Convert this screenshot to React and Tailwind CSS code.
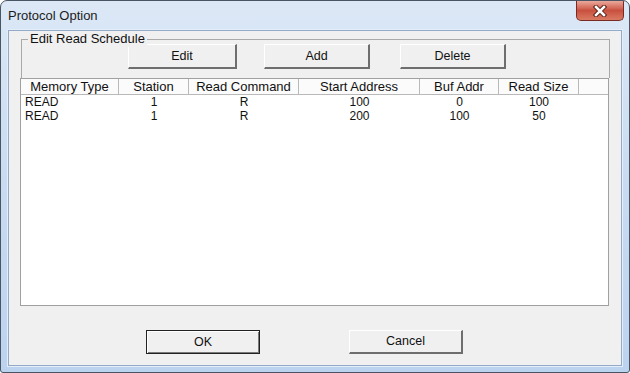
import React from "react";

const columns = [
  { title: "Memory Type", w: "w-[98px]", align: "text-left pl-[4px]" },
  { title: "Station", w: "w-[70px]", align: "text-center" },
  { title: "Read Command", w: "w-[110px]", align: "text-center" },
  { title: "Start Address", w: "w-[121px]", align: "text-center" },
  { title: "Buf Addr", w: "w-[79px]", align: "text-center" },
  { title: "Read Size", w: "w-[80px]", align: "text-center" },
];

const rows = [
  ["READ", "1", "R", "100", "0", "100"],
  ["READ", "1", "R", "200", "100", "50"],
];

// classic raised win32 push button
const Button = ({ label, className }) => (
  <button
    className={`h-[25px] bg-[#f0f0f0] border-t border-l border-t-white border-l-white border-r-2 border-b-2 border-r-[#6e6e6e] border-b-[#6e6e6e] text-[12.5px] text-[#111] ${className}`}
  >
    {label}
  </button>
);

const CloseButton = () => (
  <div className="w-[48px] h-[20px] rounded-b-[5px] border border-t-0 border-[#7a2a22] bg-gradient-to-b from-[#e9a99c] via-[#c9503f] to-[#d97a63] flex items-center justify-center">
    <svg width="16" height="12" viewBox="0 0 16 12">
      <path d="M4 2 L12 10 M12 2 L4 10" stroke="#5a2018" strokeWidth="4.5" strokeLinecap="square" />
      <path d="M4 2 L12 10 M12 2 L4 10" stroke="#ffffff" strokeWidth="2.5" strokeLinecap="square" />
    </svg>
  </div>
);

const App = () => {
  return (
    <div
      className="w-[630px] h-[373px] flex flex-col border border-[#4a5563] rounded-t-[7px] rounded-b-[3px] bg-gradient-to-b from-[#dce8f6] via-[#c8dbf1] to-[#bcd3ef] overflow-hidden"
      style={{ fontFamily: '"Liberation Sans", Arial, sans-serif' }}
    >
      {/* title bar */}
      <div className="h-[29px] flex justify-between pl-[7px] pr-[5px] shrink-0">
        <div className="self-center text-[13px] text-[#1c1c1c] pt-[1px]">Protocol Option</div>
        <CloseButton />
      </div>

      {/* client area */}
      <div className="flex-1 px-[7px] pb-[6px] flex">
        <div className="flex-1 bg-[#f0f0f0] border border-[#93abc9] shadow-[0_0_0_1px_#e4eefa] flex flex-col pt-[8px]">
          {/* group box */}
          <div className="relative ml-[12px] mr-[11px] h-[39px] border-t border-l border-r border-[#a9a9a9] shrink-0">
            <span className="absolute left-[6px] top-[-9px] px-[2px] bg-[#f0f0f0] text-[13px] leading-[16px] text-[#111]">
              Edit Read Schedule
            </span>
            <div className="flex pt-[4px]">
              <Button label="Edit" className="ml-[106px] w-[109px]" />
              <Button label="Add" className="ml-[27px] w-[106px]" />
              <Button label="Delete" className="ml-[30px] w-[106px]" />
            </div>
          </div>

          {/* list view */}
          <div className="ml-[11px] mr-[12px] h-[228px] border border-[#a0a0a0] bg-white shrink-0 text-[#111]">
            <div className="flex h-[16px] border-b border-[#b9b9b9] bg-[#fbfbfb] text-[13px]">
              {columns.map((c) => (
                <div
                  key={c.title}
                  className={`${c.w} shrink-0 border-r border-[#b9b9b9] text-center leading-[15px]`}
                >
                  {c.title}
                </div>
              ))}
              <div className="flex-1" />
            </div>
            <div className="text-[12px]">
              {rows.map((r, i) => (
                <div key={i} className="flex h-[14px] leading-[14px]">
                  {r.map((cell, j) => (
                    <div key={j} className={`${columns[j].w} shrink-0 ${columns[j].align}`}>
                      {cell}
                    </div>
                  ))}
                </div>
              ))}
            </div>
          </div>

          {/* dialog buttons */}
          <div className="flex mt-[24px]">
            <button className="ml-[137px] w-[114px] h-[24px] bg-[#f0f0f0] border border-[#222] shadow-[inset_1px_1px_0_#fff,inset_-1px_-1px_0_#7a7a7a] text-[12.5px] text-[#111]">
              OK
            </button>
            <button className="ml-[89px] w-[114px] h-[24px] bg-[#f0f0f0] border-t border-l border-t-white border-l-white border-r-2 border-b-2 border-r-[#6e6e6e] border-b-[#6e6e6e] text-[12.5px] text-[#111]">
              Cancel
            </button>
          </div>
        </div>
      </div>
    </div>
  );
};

export default App;
